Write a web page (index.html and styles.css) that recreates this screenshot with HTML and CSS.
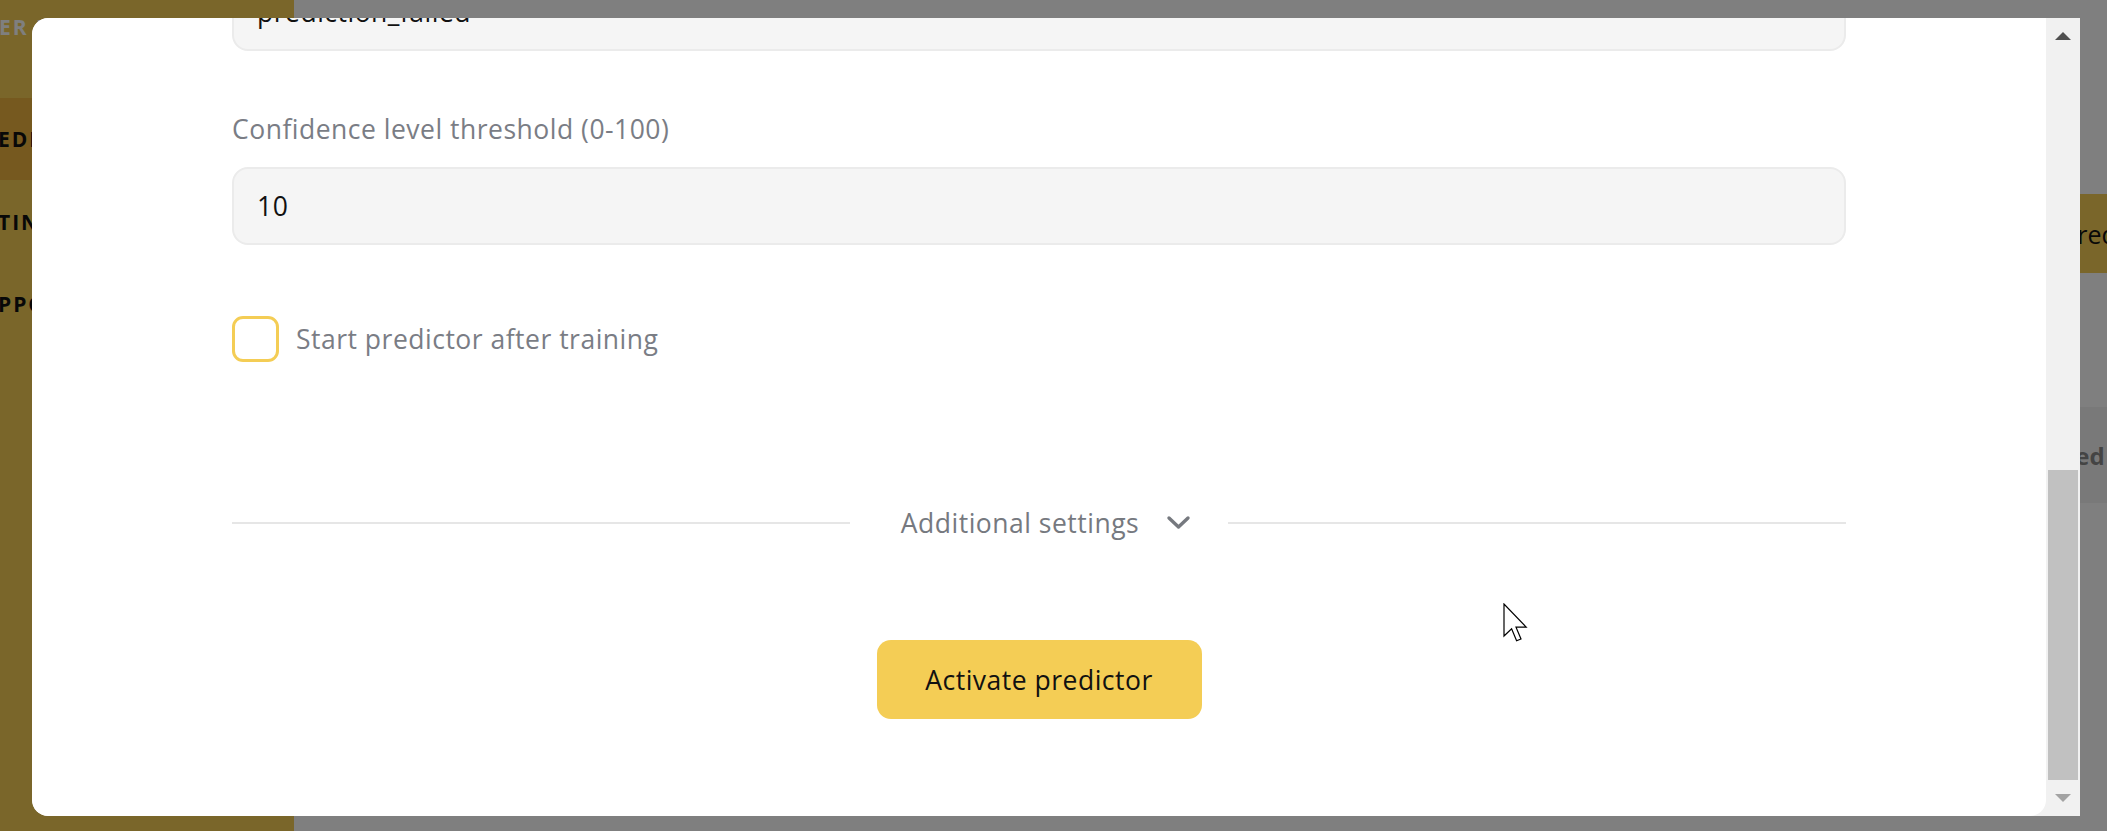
FILE: index.html
```html
<!DOCTYPE html>
<html lang="en">
<head>
<meta charset="utf-8">
<title>Activate predictor</title>
<link rel="stylesheet" href="styles.css">
</head>
<body>
<div class="app">
  <aside class="sidebar">
    <div class="nav-head">ER MANAGEMENT</div>
    <div class="nav-item active">EDICTORS</div>
    <div class="nav-item">TINGS</div>
    <div class="nav-item">PPORT</div>
  </aside>
  <main class="main">
    <div class="toolbar"><span class="new-btn">predictor</span></div>
    <div class="table-head"><span class="th">Created at</span></div>
  </main>
</div>
<div class="overlay"></div>
<div class="modal">
  <div class="modal-body">
    <div class="modal-inner">
      <div class="input input-first">prediction_failed</div>
      <div class="field-label">Confidence level threshold (0-100)</div>
      <div class="input">10</div>
      <div class="check">
        <span class="box"></span>
        <span class="check-text">Start predictor after training</span>
      </div>
      <div class="divider">
        <span class="line"></span>
        <span class="divider-mid">
          <span class="divider-text">Additional settings</span>
          <svg class="chev" width="25" height="16" viewBox="0 0 25 16"><path d="M3 3 L12.5 12 L22 3" fill="none" stroke="#76797f" stroke-width="3.4" stroke-linecap="round" stroke-linejoin="round"/></svg>
        </span>
        <span class="line"></span>
      </div>
      <div class="actions"><span class="primary">Activate predictor</span></div>
    </div>
  </div>
  <div class="scrollbar">
    <div class="sb-btn"><span class="tri-up"></span></div>
    <div class="sb-track"><div class="sb-thumb"></div></div>
    <div class="sb-btn"><span class="tri-down"></span></div>
  </div>
</div>
<svg class="cursor" width="26" height="40" viewBox="0 0 13 20"><path d="M0.5 0.5 L0.5 16.5 L4.3 12.9 L6.8 18.9 L9 18 L6.5 12.1 L11.6 12.1 Z" fill="#fff" stroke="#000" stroke-width="0.6" stroke-linejoin="miter"/></svg>
</body>
</html>
```
FILE: styles.css
```css
* { box-sizing: border-box; }
html, body { margin: 0; padding: 0; }
body {
  width: 2107px;
  height: 831px;
  overflow: hidden;
  font-family: "Open Sans", "Noto Sans", sans-serif;
  background: #ffffff;
  position: relative;
}
.app {
  display: flex;
  height: 831px;
}
.sidebar {
  width: 294px;
  flex: none;
  background: #f4cd55;
  overflow: hidden;
  white-space: nowrap;
  font-weight: 700;
  font-size: 21px;
  letter-spacing: 2px;
  line-height: 24px;
}
.nav-head {
  padding-top: 15px;
  color: #ffffff;
  margin-left: -1px;
}
.nav-item {
  color: #111;
  margin-top: 58px;
  margin-left: -2px;
}
.nav-item.active {
  margin-top: 59px;
  padding: 29px 0;
  background: #ecb33e;
}
.nav-item.active + .nav-item { margin-top: 30px; }
.main {
  flex: 1;
  padding-top: 194px;
  white-space: nowrap;
  overflow: hidden;
}
.toolbar {
  display: flex;
  height: 79px;
  padding-left: 1744px;
}
.new-btn {
  background: #f4cd55;
  padding: 0 24px;
  display: flex;
  align-items: center;
  font-size: 25px;
  color: #111;
  border-radius: 12px;
}
.table-head {
  margin-top: 134px;
  height: 96px;
  background: #f3f3f3;
  display: flex;
  align-items: center;
  padding-left: 1716px;
}
.th {
  font-weight: 700;
  font-size: 24px;
  color: #888;
}
.overlay {
  position: absolute;
  inset: 0;
  background: rgba(0, 0, 0, 0.5);
}
.modal {
  position: absolute;
  left: 32px;
  top: 18px;
  width: 2048px;
  height: 798px;
  display: flex;
  background: #f1f1f1;
  border-radius: 16px 0 0 16px;
  overflow: hidden;
}
.modal-body {
  flex: 1;
  background: #ffffff;
  border-radius: 16px 0 16px 16px;
  overflow: hidden;
}
.modal-inner {
  padding: 0 200px;
  display: flex;
  flex-direction: column;
  font-size: 26.5px;
  letter-spacing: 0.5px;
}
.input {
  height: 78px;
  background: #f5f5f5;
  border: 2px solid #ebebeb;
  border-radius: 16px;
  display: flex;
  align-items: center;
  padding: 0 23px;
  color: #111;
}
.input-first { margin-top: -45px; }
.field-label {
  margin-top: 62px;
  margin-bottom: 22px;
  line-height: 32px;
  color: #7a7d85;
}
.check {
  margin-top: 71px;
  display: flex;
  align-items: center;
  height: 46px;
  gap: 17px;
}
.box {
  width: 47px;
  height: 46px;
  border: 3px solid #f4cd55;
  border-radius: 11px;
  flex: none;
}
.check-text {
  color: #7a7d85;
}
.divider {
  margin-top: 145px;
  display: flex;
  align-items: center;
  height: 32px;
}
.line {
  flex: 1;
  height: 2px;
  background: #e6e6e6;
}
.divider-mid {
  display: flex;
  align-items: center;
  padding: 0 37px 0 51px;
}
.divider-text {
  color: #76797f;
  line-height: 32px;
}
.chev { margin-left: 27px; display: block; }
.actions {
  margin-top: 101px;
  display: flex;
  justify-content: center;
}
.primary {
  width: 325px;
  height: 79px;
  background: #f4cd55;
  border-radius: 14px;
  display: flex;
  align-items: center;
  justify-content: center;
  color: #111;
}
.scrollbar {
  width: 34px;
  flex: none;
  display: flex;
  flex-direction: column;
  background: #f1f1f1;
}
.sb-btn {
  height: 36px;
  display: flex;
  align-items: center;
  justify-content: center;
}
.sb-track {
  flex: 1;
  display: flex;
  flex-direction: column;
  justify-content: flex-end;
  padding: 0 2px;
}
.sb-thumb {
  height: 310px;
  background: #c1c1c1;
}
.tri-up {
  width: 0; height: 0;
  border-left: 8px solid transparent;
  border-right: 8px solid transparent;
  border-bottom: 8px solid #505050;
}
.tri-down {
  width: 0; height: 0;
  border-left: 8px solid transparent;
  border-right: 8px solid transparent;
  border-top: 8px solid #a3a3a3;
}
.cursor {
  position: absolute;
  left: 1503px;
  top: 603px;
}
```
